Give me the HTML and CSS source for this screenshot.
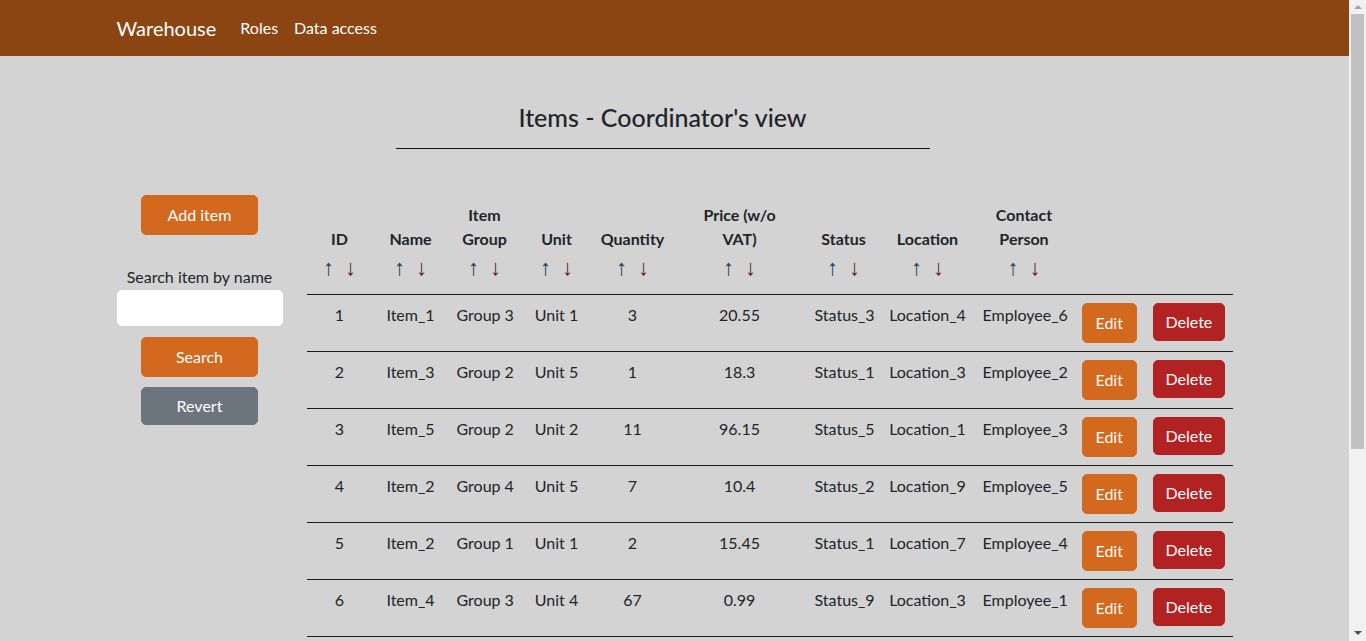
FILE: index.html
```html
<!DOCTYPE html>
<html lang="en">
<head>
<meta charset="utf-8">
<title>Warehouse - Items</title>
<link rel="stylesheet" href="styles.css">
</head>
<body>
<nav class="navbar">
  <div class="container nav-inner">
    <a class="brand" href="#">Warehouse</a>
    <a class="nav-link" href="#">Roles</a>
    <a class="nav-link" href="#">Data access</a>
  </div>
</nav>
<main class="container">
  <div class="title-block">
    <h4 class="title">Items - Coordinator's view</h4>
    <hr class="title-rule">
  </div>
  <div class="layout">
    <aside class="sidebar">
      <button class="btn btn-orange btn-wide">Add item</button>
      <label class="search-label" for="search">Search item by name</label>
      <input class="search-input" id="search" type="text">
      <button class="btn btn-orange btn-wide btn-search">Search</button>
      <button class="btn btn-grey btn-wide btn-revert">Revert</button>
    </aside>
    <section class="table-wrap">
      <table class="items">
        <colgroup>
          <col class="c-id"><col class="c-name"><col class="c-group"><col class="c-unit"><col class="c-qty"><col class="c-price"><col class="c-status"><col class="c-loc"><col class="c-contact"><col class="c-edit"><col class="c-del">
        </colgroup>
        <thead>
          <tr>
            <th>ID<div class="sort"><span class="up">↑</span><span class="down">↓</span></div></th>
            <th>Name<div class="sort"><span class="up">↑</span><span class="down">↓</span></div></th>
            <th>Item<br>Group<div class="sort"><span class="up">↑</span><span class="down">↓</span></div></th>
            <th>Unit<div class="sort"><span class="up">↑</span><span class="down">↓</span></div></th>
            <th>Quantity<div class="sort"><span class="up">↑</span><span class="down">↓</span></div></th>
            <th>Price (w/o<br>VAT)<div class="sort"><span class="up">↑</span><span class="down">↓</span></div></th>
            <th>Status<div class="sort"><span class="up">↑</span><span class="down">↓</span></div></th>
            <th>Location<div class="sort"><span class="up">↑</span><span class="down">↓</span></div></th>
            <th>Contact<br>Person<div class="sort"><span class="up">↑</span><span class="down">↓</span></div></th>
            <th></th>
            <th></th>
          </tr>
        </thead>
        <tbody>
          <tr><td>1</td><td>Item_1</td><td>Group 3</td><td>Unit 1</td><td>3</td><td>20.55</td><td>Status_3</td><td>Location_4</td><td>Employee_6</td><td class="act"><button class="btn btn-orange">Edit</button></td><td class="act"><button class="btn btn-red">Delete</button></td></tr>
          <tr><td>2</td><td>Item_3</td><td>Group 2</td><td>Unit 5</td><td>1</td><td>18.3</td><td>Status_1</td><td>Location_3</td><td>Employee_2</td><td class="act"><button class="btn btn-orange">Edit</button></td><td class="act"><button class="btn btn-red">Delete</button></td></tr>
          <tr><td>3</td><td>Item_5</td><td>Group 2</td><td>Unit 2</td><td>11</td><td>96.15</td><td>Status_5</td><td>Location_1</td><td>Employee_3</td><td class="act"><button class="btn btn-orange">Edit</button></td><td class="act"><button class="btn btn-red">Delete</button></td></tr>
          <tr><td>4</td><td>Item_2</td><td>Group 4</td><td>Unit 5</td><td>7</td><td>10.4</td><td>Status_2</td><td>Location_9</td><td>Employee_5</td><td class="act"><button class="btn btn-orange">Edit</button></td><td class="act"><button class="btn btn-red">Delete</button></td></tr>
          <tr><td>5</td><td>Item_2</td><td>Group 1</td><td>Unit 1</td><td>2</td><td>15.45</td><td>Status_1</td><td>Location_7</td><td>Employee_4</td><td class="act"><button class="btn btn-orange">Edit</button></td><td class="act"><button class="btn btn-red">Delete</button></td></tr>
          <tr><td>6</td><td>Item_4</td><td>Group 3</td><td>Unit 4</td><td>67</td><td>0.99</td><td>Status_9</td><td>Location_3</td><td>Employee_1</td><td class="act"><button class="btn btn-orange">Edit</button></td><td class="act"><button class="btn btn-red">Delete</button></td></tr>
        </tbody>
      </table>
    </section>
  </div>
</main>
<div class="scrollbar" aria-hidden="true">
  <span class="sb-arrow sb-up"></span>
  <span class="sb-thumb"></span>
  <span class="sb-arrow sb-down"></span>
</div>
</body>
</html>
```

FILE: styles.css
```css
* { box-sizing: border-box; }

html {
  background: #d3d3d3;
}

body {
  margin: 0;
  padding-right: 17px;
  background: #d3d3d3;
  font-family: "Lato", "Noto Sans", "Liberation Sans", sans-serif;
  font-size: 16px;
  line-height: 1.5;
  color: #212529;
}

.container {
  max-width: 1140px;
  margin: 0 auto;
  padding: 0 12px;
}

.navbar {
  background: #8b4513;
  height: 56px;
}

.nav-inner {
  display: flex;
  align-items: center;
  height: 56px;
}

.brand {
  color: #fff;
  font-size: 20px;
  text-decoration: none;
  margin-right: 16px;
  padding: 5px 0;
}

.nav-link {
  color: #fff;
  text-decoration: none;
  padding: 8px;
}

.title-block {
  width: 534px;
  margin: 0 0 0 279px;
  padding-top: 46px;
  text-align: center;
}

.title {
  margin: 0;
  font-size: 25px;
  font-weight: 500;
  line-height: 30px;
  color: #212529;
}

.title-rule {
  margin: 16px 0 0;
  border: 0;
  border-top: 1px solid #111;
  height: 0;
}

.layout {
  display: grid;
  grid-template-columns: 166px 1fr;
  column-gap: 24px;
  margin-top: 46px;
  padding-bottom: 257px;
}

.sidebar {
  display: flex;
  flex-direction: column;
  align-items: center;
}

.btn {
  font-family: inherit;
  font-size: 16px;
  line-height: 24px;
  color: #fff;
  border: 1px solid transparent;
  border-radius: 5px;
  padding: 6px 12px;
  cursor: pointer;
}

.btn-orange {
  background: #d2691e;
  border-color: #d2691e;
  padding: 7px 13px;
}

.btn-red {
  background: #b22222;
  border-color: #b22222;
}

.btn-grey {
  background: #6c757d;
  border-color: #6c757d;
}

.btn-wide { width: 117px; }

.search-label {
  margin-top: 30px;
  line-height: 24px;
}

.search-input {
  margin-top: 1px;
  width: 100%;
  height: 36px;
  border: 1px solid #fff;
  border-radius: 5px;
  background: #fff;
  font-family: inherit;
  font-size: 16px;
  padding: 6px 12px;
}

.btn-search { margin-top: 11px; }
.btn-revert { margin-top: 10px; }

.items {
  width: 926px;
  table-layout: fixed;
  border-collapse: collapse;
  text-align: center;
}

.c-id { width: 66px; }
.c-name { width: 76px; }
.c-group { width: 72px; }
.c-unit { width: 72px; }
.c-qty { width: 80px; }
.c-price { width: 134px; }
.c-status { width: 74px; }
.c-loc { width: 94px; }
.c-contact { width: 99px; }
.c-edit { width: 71px; }
.c-del { width: 88px; }

.items th {
  vertical-align: bottom;
  font-weight: 700;
  padding: 8px;
  border-bottom: 1px solid #1a1a1a;
  white-space: nowrap;
}

.items td {
  vertical-align: top;
  padding: 8px;
  border-bottom: 1px solid #1a1a1a;
  white-space: nowrap;
}

.items td.act { text-align: left; }

.sort {
  display: flex;
  justify-content: center;
  gap: 11px;
  height: 35px;
  line-height: 33px;
  font-family: "Liberation Sans", "DejaVu Sans", sans-serif;
  font-size: 22px;
  font-weight: 400;
}

.sort .up { color: #173f5f; }
.sort .down { color: #5a1f22; }

/* window scrollbar drawn over the right edge */
.scrollbar {
  position: fixed;
  top: 0;
  right: 0;
  width: 17px;
  height: 100vh;
  background: #f1f1f1;
  display: flex;
  flex-direction: column;
  align-items: center;
}

.sb-arrow {
  width: 0;
  height: 0;
  border-left: 4px solid transparent;
  border-right: 4px solid transparent;
}

.sb-up {
  margin-top: 5px;
  border-bottom: 4px solid #a3a3a3;
}

.sb-thumb {
  margin-top: 5px;
  width: 13px;
  height: 435px;
  background: #c1c1c1;
}

.sb-down {
  margin-top: auto;
  margin-bottom: 6px;
  border-top: 4px solid #505050;
}
```
